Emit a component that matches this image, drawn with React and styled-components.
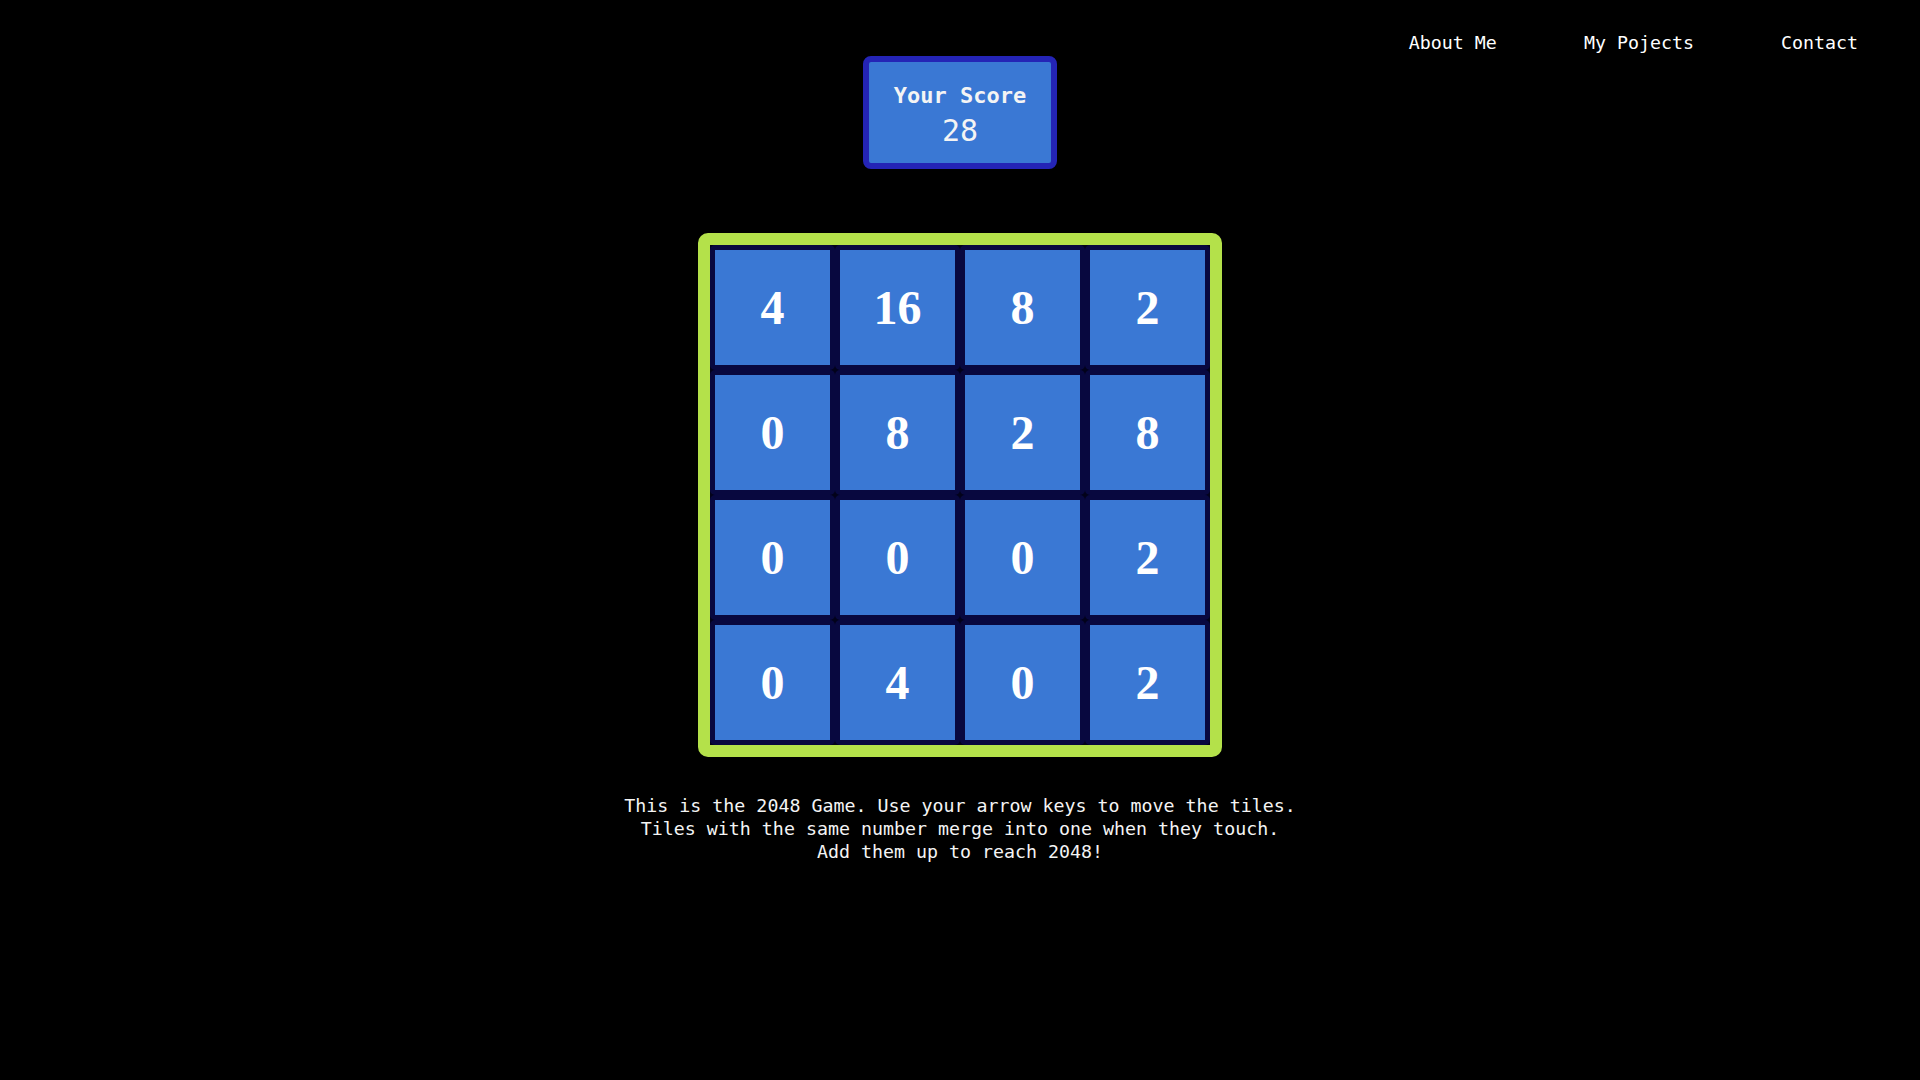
import React from 'react'
import styled, { createGlobalStyle } from 'styled-components'

const GlobalStyle = createGlobalStyle`
  html, body {
    margin: 0;
    padding: 0;
    background-color: #000;
  }
  body {
    min-height: 100vh;
    font-family: "DejaVu Sans Mono", "Liberation Mono", monospace;
    color: #f4f4f4;
  }
`

const Page = styled.div`
  display: flex;
  flex-direction: column;
  align-items: center;
  min-height: 100vh;
`

const TopRow = styled.div`
  width: 100%;
  display: grid;
  grid-template-columns: 1fr auto 1fr;
  align-items: start;
`

const Nav = styled.nav`
  grid-column: 3;
  justify-self: end;
  display: flex;
  gap: 87px;
  padding: 31px 62px 0 0;
`

const NavLink = styled.a`
  font-size: 18.3px;
  line-height: 24px;
  color: #fff;
  text-decoration: none;
  cursor: pointer;
`

const ScoreBox = styled.div`
  grid-column: 2;
  margin-top: 56px;
  width: 182px;
  height: 96px;
  padding-top: 5px;
  border: 6px solid #2424b6;
  border-radius: 8px;
  background-color: #3a78d4;
  display: flex;
  flex-direction: column;
  align-items: center;
  justify-content: center;
`

const ScoreTitle = styled.div`
  font-size: 22px;
  line-height: 26px;
  font-weight: bold;
  color: #f4f4f4;
  margin-bottom: 5px;
`

const ScoreValue = styled.div`
  font-size: 30px;
  line-height: 34px;
  color: #f4f4f4;
`

const Board = styled.div`
  margin-top: 64px;
  border: 12px solid #b4e14a;
  border-radius: 10px;
  background-color: #02021a;
  display: grid;
  grid-template-columns: repeat(4, 125px);
  grid-template-rows: repeat(4, 125px);
`

const Tile = styled.div`
  box-sizing: border-box;
  border: 5px solid #08083f;
  border-radius: 5px;
  background-color: #3a78d4;
  display: flex;
  align-items: center;
  justify-content: center;
  font-family: "Liberation Serif", "Times New Roman", serif;
  font-weight: bold;
  font-size: 48px;
  color: #fff;
`

const Description = styled.p`
  margin: 37px 0 0;
  font-size: 18.3px;
  line-height: 23px;
  text-align: center;
  color: #f4f4f4;
`

const board = [
  [4, 16, 8, 2],
  [0, 8, 2, 8],
  [0, 0, 0, 2],
  [0, 4, 0, 2],
]

export default function App() {
  return (
    <>
      <GlobalStyle />
      <Page>
        <TopRow>
          <ScoreBox>
            <ScoreTitle>Your Score</ScoreTitle>
            <ScoreValue>28</ScoreValue>
          </ScoreBox>
          <Nav>
            <NavLink>About Me</NavLink>
            <NavLink>My Pojects</NavLink>
            <NavLink>Contact</NavLink>
          </Nav>
        </TopRow>
        <Board>
          {board.flat().map((value, i) => (
            <Tile key={i}>{value}</Tile>
          ))}
        </Board>
        <Description>
          This is the 2048 Game. Use your arrow keys to move the tiles.
          <br />
          Tiles with the same number merge into one when they touch.
          <br />
          Add them up to reach 2048!
        </Description>
      </Page>
    </>
  )
}
